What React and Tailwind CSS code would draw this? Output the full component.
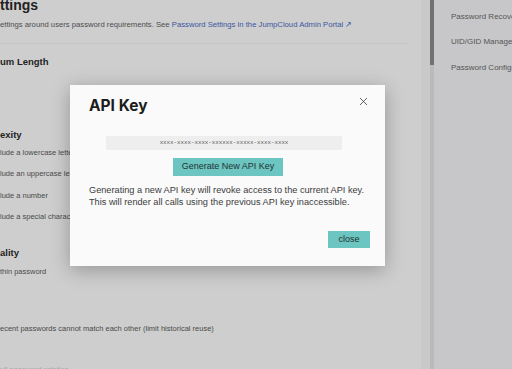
import { X } from "lucide-react";

const font = { fontFamily: '"Liberation Sans", Arial, sans-serif' };

function CheckLine({ children, className = "" }) {
  return (
    <div className={"text-[7.5px] leading-[10px] text-[#4a4a4a] whitespace-nowrap " + className}>
      {children}
    </div>
  );
}

export default function App() {
  return (
    <div
      className="relative w-[512px] h-[369px] overflow-hidden flex bg-[#cecece]"
      style={font}
    >
      {/* Left settings column (dimmed by backdrop) */}
      <div className="w-[421px] shrink-0 overflow-hidden bg-[#cecece]">
        <div className="mt-[-3px] text-[14px] leading-[16px] font-bold text-[#222] whitespace-nowrap">
          ttings
        </div>
        <div className="mt-[7px] text-[7.7px] leading-[10px] text-[#4d4d4d] whitespace-nowrap">
          ettings around users password requirements. See{" "}
          <span className="text-[#3b56a0]">Password Settings in the JumpCloud Admin Portal ↗</span>
        </div>
        <div className="mt-[13px] w-[409px] h-px bg-[#c4c4c4]" />
        <div className="mt-[12px] text-[9.5px] leading-[12px] font-bold text-[#232323]">um Length</div>

        <div className="mt-[61px] text-[9.5px] leading-[12px] font-bold text-[#232323]">exity</div>
        <CheckLine className="mt-[7px]">lude a lowercase letter</CheckLine>
        <CheckLine className="mt-[11px]">lude an uppercase letter</CheckLine>
        <CheckLine className="mt-[12px]">lude a number</CheckLine>
        <CheckLine className="mt-[11px]">lude a special character</CheckLine>

        <div className="mt-[25px] text-[9.5px] leading-[12px] font-bold text-[#232323]">ality</div>
        <CheckLine className="mt-[8px]">thin password</CheckLine>
        <CheckLine className="mt-[47px]">ecent passwords cannot match each other (limit historical reuse)</CheckLine>
        <CheckLine className="mt-[31px] text-[#a5a5a5]">ull password rotation</CheckLine>
      </div>

      {/* Strip + scrollbar */}
      <div className="w-[9px] shrink-0 bg-[#c9c9c9]" />
      <div className="w-[4px] shrink-0 flex flex-col bg-[#b7bbbb]">
        <div className="h-[65px] bg-[#6f7174]" />
      </div>

      {/* Right nav panel */}
      <div className="flex-1 bg-[#c7c7c9] pl-[17px] pt-[12px] overflow-hidden">
        <div className="text-[8px] leading-[10px] text-[#555] whitespace-nowrap">Password Recovery</div>
        <div className="mt-[15px] text-[8px] leading-[10px] text-[#555] whitespace-nowrap">UID/GID Management</div>
        <div className="mt-[16px] text-[8px] leading-[10px] text-[#555] whitespace-nowrap">Password Configuration</div>
      </div>

      {/* Modal */}
      <div className="absolute left-[70px] top-[85px] w-[315px] h-[181px] bg-[#fafafa] shadow-[0_4px_18px_rgba(0,0,0,0.28)] px-[19px] pt-[11px] flex flex-col">
        <div className="flex items-center justify-between">
          <div className="text-[15.5px] leading-[20px] font-bold text-[#1c1c1c]" style={{ fontFamily: '"Inter", "Liberation Sans", sans-serif' }}>
            API Key
          </div>
          <X size={13} strokeWidth={1.4} className="text-[#333] mr-[-4px] mt-[-9px]" />
        </div>
        <div className="mt-[20px] ml-[17px] w-[236px] h-[14px] bg-[#eeeeee] flex items-center justify-center">
          <span className="text-[5.8px] text-[#555]" style={{ fontFamily: '"Liberation Mono", monospace' }}>
            xxxx-xxxx-xxxx-xxxxxx-xxxxx-xxxx-xxxx
          </span>
        </div>
        <div className="mt-[8px] self-center ml-[1px] w-[110px] h-[18px] bg-[#6cc5c0] flex items-center justify-center text-[9px] text-[#233]">
          Generate New API Key
        </div>
        <div className="mt-[9px] text-[9.2px] leading-[11.5px] text-[#3a3a3a] whitespace-nowrap">
          Generating a new API key will revoke access to the current API key.
          <br />
          This will render all calls using the previous API key inaccessible.
        </div>
        <div className="mt-[23px] self-end mr-[-4px] w-[42px] h-[17px] bg-[#6cc5c0] flex items-center justify-center text-[9px] text-[#233]">
          close
        </div>
      </div>
    </div>
  );
}
